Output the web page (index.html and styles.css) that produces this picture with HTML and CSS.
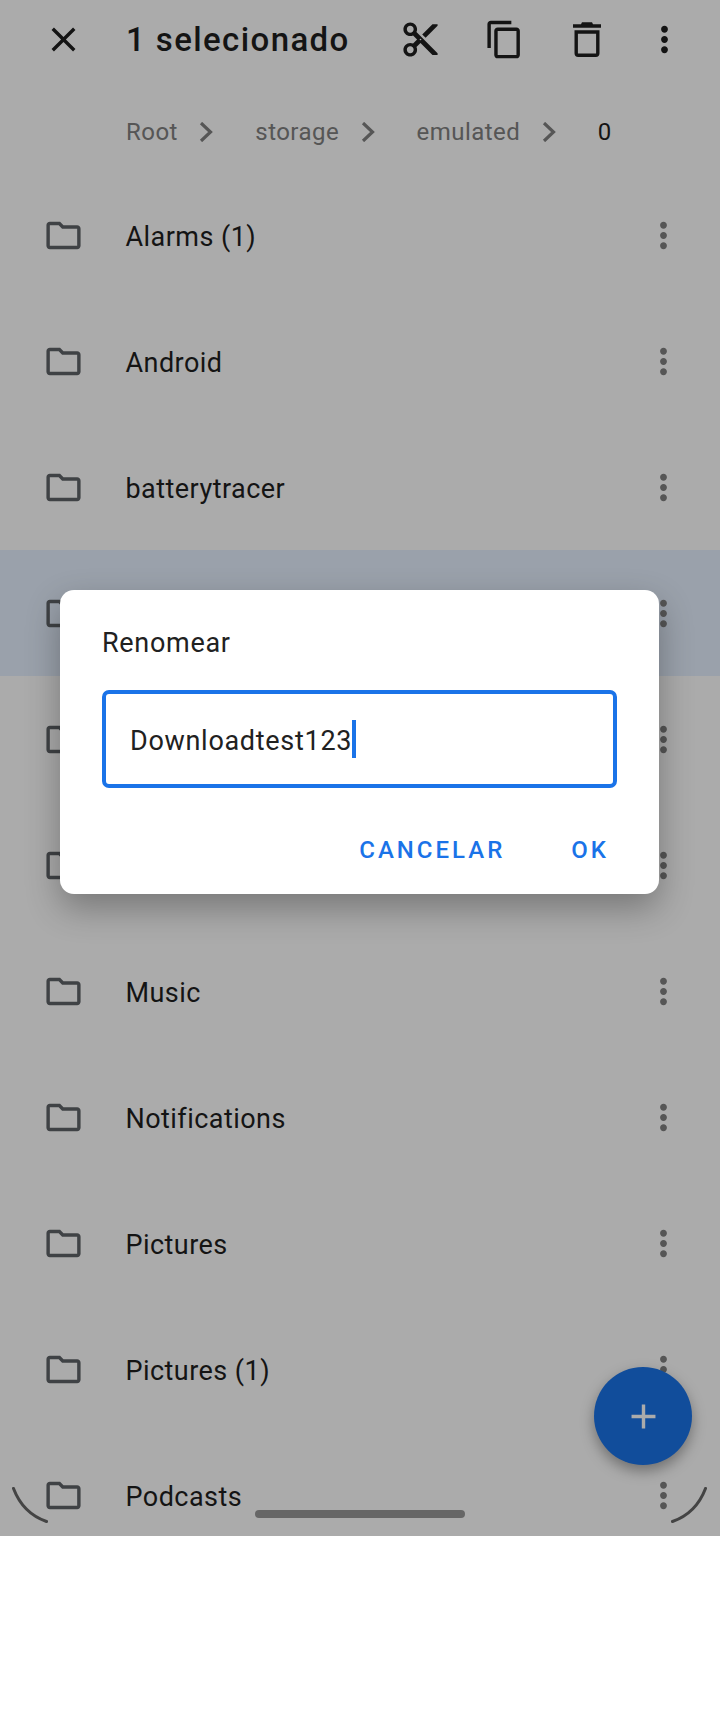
FILE: index.html
```html
<!DOCTYPE html>
<html lang="pt">
<head>
<meta charset="utf-8">
<title>Renomear</title>
<link rel="stylesheet" href="styles.css">
</head>
<body>
<main class="screen">
  <svg width="0" height="0" class="defs">
    <defs>
      <symbol id="folder" viewBox="0 0 24 24"><path d="M20 6h-8l-2-2H4c-1.1 0-1.99.9-1.99 2L2 18c0 1.1.9 2 2 2h16c1.1 0 2-.9 2-2V8c0-1.1-.9-2-2-2zm0 12H4V6h5.17l2 2H20v10z"/></symbol>
      <symbol id="more" viewBox="0 0 24 24"><path d="M12 8c1.1 0 2-.9 2-2s-.9-2-2-2-2 .9-2 2 .9 2 2 2zm0 2c-1.1 0-2 .9-2 2s.9 2 2 2 2-.9 2-2-.9-2-2-2zm0 6c-1.1 0-2 .9-2 2s.9 2 2 2 2-.9 2-2-.9-2-2-2z"/></symbol>
      <symbol id="chevron" viewBox="0 0 14 20"><path d="M2 1l9.500 9L2 19" fill="none" stroke="currentColor" stroke-width="3.200"/></symbol>
    </defs>
  </svg>

  <header class="toolbar">
    <svg class="icon" viewBox="0 0 24 24"><path d="M19 6.41L17.59 5 12 10.59 6.41 5 5 6.41 10.59 12 5 17.59 6.41 19 12 13.41 17.59 19 19 17.59 13.41 12z"/></svg>
    <h1 class="title">1 selecionado</h1>
    <svg class="icon" viewBox="0 0 24 24"><path d="M9.64 7.64c.23-.5.36-1.05.36-1.64 0-2.21-1.79-4-4-4S2 3.79 2 6s1.79 4 4 4c.59 0 1.14-.13 1.64-.36L10 12l-2.36 2.36C7.14 14.13 6.59 14 6 14c-2.21 0-4 1.79-4 4s1.79 4 4 4 4-1.79 4-4c0-.59-.13-1.14-.36-1.64L12 14l7 7h3v-1L9.64 7.64zM6 8c-1.1 0-2-.89-2-2s.9-2 2-2 2 .89 2 2-.9 2-2 2zm0 12c-1.1 0-2-.89-2-2s.9-2 2-2 2 .89 2 2-.9 2-2 2zm6-7.5c-.28 0-.5-.22-.5-.5s.22-.5.5-.5.5.22.5.5-.22.5-.5.5zM19 3l-6 6 2 2 7-7V3h-3z"/></svg>
    <svg class="icon" viewBox="0 0 24 24"><path d="M16 1H4c-1.1 0-2 .9-2 2v14h2V3h12V1zm3 4H8c-1.1 0-2 .9-2 2v14c0 1.1.9 2 2 2h11c1.1 0 2-.9 2-2V7c0-1.1-.9-2-2-2zm0 16H8V7h11v14z"/></svg>
    <svg class="icon trash" viewBox="0 0 41 41"><path d="M6 5.300h8l1-2h10l1 2h8v3.400H6z"/><path d="M9.200 13h21.600v21.300a2 2 0 0 1-2 2H11.200a2 2 0 0 1-2-2z" fill="none" stroke="currentColor" stroke-width="3.400"/></svg>
    <svg class="icon" viewBox="0 0 24 24"><use href="#more"/></svg>
  </header>

  <nav class="crumbs">
    <span class="crumb">Root</span><svg class="chevron"><use href="#chevron"/></svg>
    <span class="crumb">storage</span><svg class="chevron"><use href="#chevron"/></svg>
    <span class="crumb">emulated</span><svg class="chevron"><use href="#chevron"/></svg>
    <span class="crumb current">0</span>
  </nav>

  <ul class="list">
    <li class="row"><svg class="icon folder"><use href="#folder"/></svg><span class="name">Alarms (1)</span><svg class="icon kebab"><use href="#more"/></svg></li>
    <li class="row"><svg class="icon folder"><use href="#folder"/></svg><span class="name">Android</span><svg class="icon kebab"><use href="#more"/></svg></li>
    <li class="row"><svg class="icon folder"><use href="#folder"/></svg><span class="name">batterytracer</span><svg class="icon kebab"><use href="#more"/></svg></li>
    <li class="row selected"><svg class="icon folder"><use href="#folder"/></svg><span class="name"></span><svg class="icon kebab"><use href="#more"/></svg></li>
    <li class="row"><svg class="icon folder"><use href="#folder"/></svg><span class="name"></span><svg class="icon kebab"><use href="#more"/></svg></li>
    <li class="row"><svg class="icon folder"><use href="#folder"/></svg><span class="name"></span><svg class="icon kebab"><use href="#more"/></svg></li>
    <li class="row"><svg class="icon folder"><use href="#folder"/></svg><span class="name">Music</span><svg class="icon kebab"><use href="#more"/></svg></li>
    <li class="row"><svg class="icon folder"><use href="#folder"/></svg><span class="name">Notifications</span><svg class="icon kebab"><use href="#more"/></svg></li>
    <li class="row"><svg class="icon folder"><use href="#folder"/></svg><span class="name">Pictures</span><svg class="icon kebab"><use href="#more"/></svg></li>
    <li class="row"><svg class="icon folder"><use href="#folder"/></svg><span class="name">Pictures (1)</span><svg class="icon kebab"><use href="#more"/></svg></li>
    <li class="row"><svg class="icon folder"><use href="#folder"/></svg><span class="name">Podcasts</span><svg class="icon kebab"><use href="#more"/></svg></li>
  </ul>

  <button class="fab" type="button" aria-label="Adicionar">
    <svg class="icon" viewBox="0 0 24 24"><path d="M19 13h-6v6h-2v-6H5v-2h6V5h2v6h6v2z"/></svg>
  </button>

  <div class="scrim"></div>

  <section class="dialog">
    <h2 class="dialog-title">Renomear</h2>
    <div class="field"><span class="field-text">Downloadtest123</span><span class="caret"></span></div>
    <div class="actions">
      <span class="action">CANCELAR</span>
      <span class="action">OK</span>
    </div>
  </section>

  <svg class="corner corner-left" viewBox="0 0 36 36"><path d="M1.500 1.500C7 16 16 28 34.500 34.500"/></svg>
  <svg class="corner corner-right" viewBox="0 0 36 36"><path d="M34.500 1.500C29 16 20 28 1.500 34.500"/></svg>
  <div class="gesture"></div>
</main>
</body>
</html>
```
FILE: styles.css
```css
* { box-sizing: border-box; }
html, body { margin: 0; padding: 0; background: #fff; }
body { font-family: Roboto, "Liberation Sans", sans-serif; color: #1f1f1f; }
.defs { position: absolute; }

.screen {
  position: relative;
  width: 720px;
  height: 1536px;
  overflow: hidden;
  background: #fff;
}

.icon { width: 41px; height: 41px; flex: none; fill: currentColor; display: block; }
.trash { margin-right: -7px; }

.toolbar {
  height: 78px;
  display: flex;
  align-items: center;
  padding-left: 42.5px;
  gap: 42.5px;
  color: #1f1f1f;
}
.title {
  margin: 0;
  width: 231.5px;
  font-size: 33px;
  font-weight: 500;
  letter-spacing: 1.4px;
  white-space: nowrap;
}

.crumbs {
  height: 82px;
  margin-top: 12px;
  display: flex;
  align-items: center;
  padding: 2px 0 0 126px;
  font-size: 24px;
  letter-spacing: 0.45px;
  color: #808080;
}
.crumb { white-space: nowrap; }
.crumb.current { color: #1f1f1f; }
.chevron { width: 14px; height: 20px; margin: 0 42px 0 21.5px; color: #808080; flex: none; }

.list { list-style: none; margin: 0; padding: 0; }

.row {
  height: 126px;
  display: flex;
  align-items: center;
  padding: 0 36px 0 42.5px;
  gap: 42px;
}
.row.selected { background: #e6f0ff; }
.name {
  flex: 1;
  padding-top: 3px;
  font-size: 27px;
  letter-spacing: 0.45px;
  color: #1f1f1f;
  white-space: nowrap;
}
.folder { color: #5f6368; }
.kebab { color: #808080; }

.fab {
  position: absolute;
  left: 594px;
  top: 1367px;
  width: 98px;
  height: 98px;
  border: 0;
  padding: 0;
  border-radius: 50%;
  background: #1a73e8;
  color: #fff;
  display: flex;
  align-items: center;
  justify-content: center;
  box-shadow: 0 6px 14px rgba(0, 0, 0, 0.35);
}

.scrim { position: absolute; inset: 0; background: rgba(0, 0, 0, 0.33); }

.dialog {
  position: absolute;
  left: 60px;
  top: 590px;
  width: 599px;
  height: 304px;
  padding: 36px 42px 0;
  background: #fff;
  border-radius: 14px;
  box-shadow: 0 14px 34px rgba(0, 0, 0, 0.3);
}
.dialog-title {
  margin: 0;
  font-size: 27px;
  font-weight: 400;
  letter-spacing: 0.7px;
  line-height: 34px;
  color: #212121;
}
.field {
  margin-top: 30px;
  width: 515px;
  height: 98px;
  border: 4px solid #1a73e8;
  border-radius: 7px;
  display: flex;
  align-items: center;
  padding-left: 24px;
  font-size: 27px;
  letter-spacing: 0.7px;
  color: #212121;
}
.field-text { white-space: nowrap; padding-top: 3px; }
.caret { width: 4px; height: 38px; background: #1a73e8; }
.actions {
  margin-top: 44px;
  display: flex;
  justify-content: flex-end;
  gap: 66px;
  padding-right: 8px;
  font-size: 24px;
  font-weight: 500;
  letter-spacing: 3px;
  line-height: 36px;
  color: #1a73e8;
}

.corner {
  position: absolute;
  top: 1487px;
  width: 36px;
  height: 36px;
  fill: none;
  stroke: #444;
  stroke-width: 3;
  stroke-linecap: round;
}
.corner-left { left: 12px; }
.corner-right { left: 671px; }

.gesture {
  position: absolute;
  left: 255px;
  top: 1510px;
  width: 210px;
  height: 8px;
  border-radius: 4px;
  background: #666;
}
```
